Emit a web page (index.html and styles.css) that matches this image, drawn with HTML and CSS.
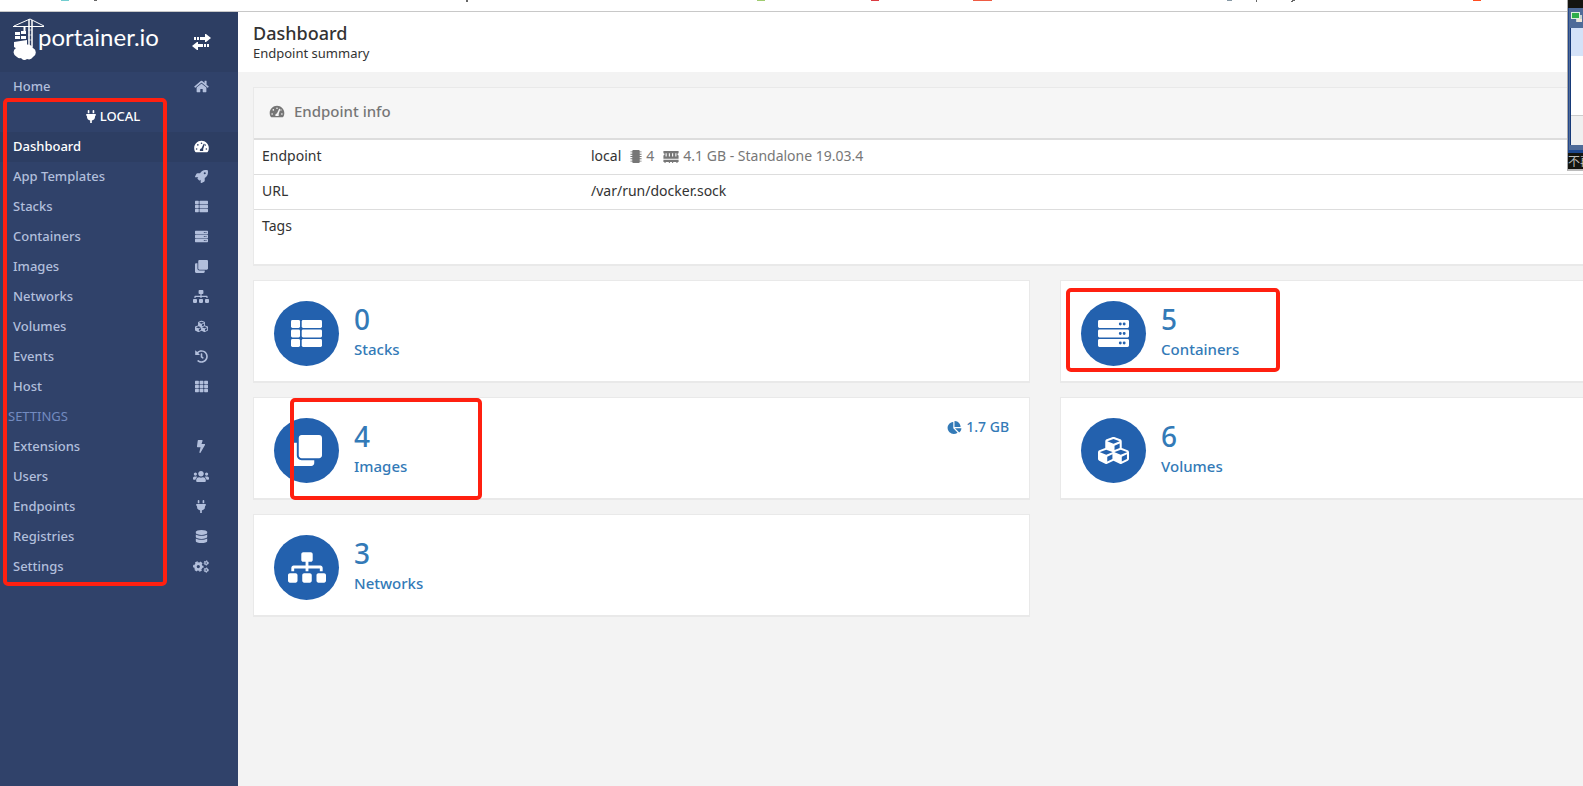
FILE: index.html
```html
<!DOCTYPE html>
<html lang="en">
<head>
<meta charset="utf-8">
<title>Portainer</title>
<link rel="stylesheet" href="styles.css">
</head>
<body>
<svg class="defs" aria-hidden="true">
  <symbol id="home" viewBox="0 0 576 512"><path d="M280.37 148.26L96 300.11V464a16 16 0 0 0 16 16l112.06-.29a16 16 0 0 0 15.92-16V368a16 16 0 0 1 16-16h64a16 16 0 0 1 16 16v95.64a16 16 0 0 0 16 16.05L464 480a16 16 0 0 0 16-16V300L295.67 148.26a12.19 12.19 0 0 0-15.3 0zM571.6 251.47L488 182.56V44.05a12 12 0 0 0-12-12h-56a12 12 0 0 0-12 12v72.61L318.47 43a48 48 0 0 0-61 0L4.34 251.47a12 12 0 0 0-1.6 16.9l25.5 31A12 12 0 0 0 45.15 301l235.22-193.74a12.19 12.19 0 0 1 15.3 0L530.9 301a12 12 0 0 0 16.9-1.6l25.5-31a12 12 0 0 0-1.7-16.93z"/></symbol>
  <symbol id="plug" viewBox="0 0 384 512"><path d="M320,32a32,32,0,0,0-64,0v96h64Zm48,128H16A16,16,0,0,0,0,176v32a16,16,0,0,0,16,16H32v32A160.07,160.07,0,0,0,160,412.8V512h64V412.8A160.07,160.07,0,0,0,352,256V224h16a16,16,0,0,0,16-16V176A16,16,0,0,0,368,160ZM128,32a32,32,0,0,0-64,0v96h64Z"/></symbol>
  <symbol id="gauge" viewBox="0 0 576 512"><path fill-rule="evenodd" d="M288 32C128.94 32 0 160.94 0 320c0 52.8 14.25 102.26 39.06 144.8 5.61 9.62 16.3 15.2 27.44 15.2h443c11.14 0 21.83-5.58 27.44-15.2C561.75 422.26 576 372.8 576 320c0-159.06-128.94-288-288-288zM288 96a32 32 0 1 1 0 64a32 32 0 1 1 0-64zM96 384a32 32 0 1 1 0-64a32 32 0 1 1 0 64zM144 224a32 32 0 1 1 0-64a32 32 0 1 1 0 64zM480 384a32 32 0 1 1 0-64a32 32 0 1 1 0 64zM399 145c12 4 19 17 15 30l-63 190c15 25 8 51-4 67H229c-18-35 0-90 55-95l85-177c5-11 17-18 30-15zM440 224a30 30 0 0 1-18-8l17-52c18 0 31 14 31 30s-14 30-30 30z"/></symbol>
  <symbol id="rocket" viewBox="0 0 512 512"><path d="M505.12 19.09c-1.19-5.53-6.66-11-12.21-12.19C460.72 0 435.51 0 410.41 0 307.18 0 245.27 55.2 199.05 128H94.84c-16.35 0-35.56 11.88-42.89 26.48L2.52 253.3A28.4 28.4 0 0 0 0 264a24 24 0 0 0 24 24h103.8l-22.46 22.47c-11.37 11.36-13 32.26 0 45.25l50.9 50.9c11.16 11.2 32.16 13.16 45.28 0L224 384.16V488a24 24 0 0 0 24 24 28.56 28.56 0 0 0 10.7-2.52l98.74-49.39c14.62-7.29 26.5-26.5 26.5-42.86V312.8c72.6-46.31 128.04-108.4 128.04-211.1 0-25.2 0-50.4-6.86-82.61zM384.04 168A40 40 0 1 1 424.05 128 40 40 0 0 1 384.04 168z"/></symbol>
  <symbol id="list" viewBox="0 0 512 512"><rect y="32" width="149" height="132" rx="24"/><rect y="190" width="149" height="132" rx="24"/><rect y="348" width="149" height="132" rx="24"/><rect x="177" y="32" width="335" height="132" rx="24"/><rect x="177" y="190" width="335" height="132" rx="24"/><rect x="177" y="348" width="335" height="132" rx="24"/></symbol>
  <symbol id="server" viewBox="0 0 512 512"><path fill-rule="evenodd" d="M24 32H488a24 24 0 0 1 24 24V140a24 24 0 0 1-24 24H24a24 24 0 0 1-24-24V56a24 24 0 0 1 24-24zM368 74a24 24 0 1 0 0 48a24 24 0 1 0 0-48zM432 74a24 24 0 1 0 0 48a24 24 0 1 0 0-48zM24 190H488a24 24 0 0 1 24 24V298a24 24 0 0 1-24 24H24a24 24 0 0 1-24-24V214a24 24 0 0 1 24-24zM368 232a24 24 0 1 0 0 48a24 24 0 1 0 0-48zM432 232a24 24 0 1 0 0 48a24 24 0 1 0 0-48zM24 348H488a24 24 0 0 1 24 24V456a24 24 0 0 1-24 24H24a24 24 0 0 1-24-24V372a24 24 0 0 1 24-24zM368 390a24 24 0 1 0 0 48a24 24 0 1 0 0-48zM432 390a24 24 0 1 0 0 48a24 24 0 1 0 0-48z"/></symbol>
  <symbol id="clone" viewBox="0 0 512 512"><path d="M464 0c26.51 0 48 21.49 48 48v288c0 26.51-21.49 48-48 48H176c-26.51 0-48-21.49-48-48V48c0-26.51 21.49-48 48-48h288M176 416c-44.112 0-80-35.888-80-80V128H48c-26.51 0-48 21.49-48 48v288c0 26.51 21.49 48 48 48h288c26.51 0 48-21.49 48-48v-48H176z"/></symbol>
  <symbol id="sitemap" viewBox="0 0 640 512"><path d="M128 352H32c-17.67 0-32 14.33-32 32v96c0 17.67 14.33 32 32 32h96c17.67 0 32-14.33 32-32v-96c0-17.67-14.33-32-32-32zm-24-80h192v48h48v-48h192v48h48v-57.59c0-21.17-17.23-38.41-38.41-38.41H344v-64h40c17.67 0 32-14.33 32-32V32c0-17.67-14.33-32-32-32H256c-17.67 0-32 14.33-32 32v96c0 17.67 14.33 32 32 32h40v64H94.41C73.23 224 56 241.23 56 262.41V320h48v-48zm264 80h-96c-17.67 0-32 14.33-32 32v96c0 17.67 14.33 32 32 32h96c17.67 0 32-14.33 32-32v-96c0-17.67-14.33-32-32-32zm240 0h-96c-17.67 0-32 14.33-32 32v96c0 17.67 14.33 32 32 32h96c17.67 0 32-14.33 32-32v-96c0-17.67-14.33-32-32-32z"/></symbol>
  <symbol id="cubes" viewBox="0 0 512 512"><path d="M488.6 250.2L392 214V105.5c0-15-9.3-28.4-23.4-33.7l-100-37.5c-8.1-3.1-17.1-3.1-25.3 0l-100 37.5c-14.1 5.3-23.4 18.7-23.4 33.7V214l-96.6 36.2C9.3 255.5 0 268.9 0 283.9V394c0 13.6 7.7 26.1 19.9 32.2l100 50c10.1 5.1 22.1 5.1 32.2 0l103.9-52 103.9 52c10.1 5.1 22.1 5.1 32.2 0l100-50c12.2-6.1 19.9-18.6 19.9-32.2V283.9c0-15-9.3-28.4-23.4-33.7zM358 214.8l-85 31.9v-68.2l85-37v73.3zM154 104.1l102-38.2 102 38.2v.6l-102 41.4-102-41.4v-.6zm84 291.1l-85 42.5v-79.1l85-38.8v75.4zm0-112l-102 41.4-102-41.4v-.6l102-38.2 102 38.2v.6zm240 112l-85 42.5v-79.1l85-38.8v75.4zm0-112l-102 41.4-102-41.4v-.6l102-38.2 102 38.2v.6z"/></symbol>
  <symbol id="history" viewBox="0 0 512 512"><path d="M504 255.531c.253 136.64-111.18 248.372-247.82 248.468-59.015.042-113.223-20.53-155.822-54.911-11.077-8.94-11.905-25.541-1.839-35.607l11.267-11.267c8.609-8.609 22.353-9.551 31.891-1.984C173.062 425.135 212.781 440 256 440c101.705 0 184-82.311 184-184 0-101.705-82.311-184-184-184-48.814 0-93.149 18.969-126.068 49.932l50.754 50.754c10.08 10.08 2.941 27.314-11.313 27.314H24c-8.837 0-16-7.163-16-16V38.627c0-14.254 17.234-21.393 27.314-11.314l49.372 49.372C129.209 34.136 189.552 8 256 8c136.81 0 247.747 110.78 248 247.531zm-180.912 78.784l9.823-12.63c8.138-10.463 6.253-25.542-4.21-33.679L288 256.349V152c0-13.255-10.745-24-24-24h-16c-13.255 0-24 10.745-24 24v135.651l65.409 50.874c10.463 8.137 25.541 6.253 33.679-4.21z"/></symbol>
  <symbol id="grid" viewBox="0 0 512 512"><rect y="32" width="152" height="132" rx="24"/><rect y="190" width="152" height="132" rx="24"/><rect y="348" width="152" height="132" rx="24"/><rect x="180" y="32" width="152" height="132" rx="24"/><rect x="180" y="190" width="152" height="132" rx="24"/><rect x="180" y="348" width="152" height="132" rx="24"/><rect x="360" y="32" width="152" height="132" rx="24"/><rect x="360" y="190" width="152" height="132" rx="24"/><rect x="360" y="348" width="152" height="132" rx="24"/></symbol>
  <symbol id="bolt" viewBox="0 0 320 512"><path d="M296 160H180.6l42.6-129.8C227.2 15 215.7 0 200 0H56C44 0 33.8 8.9 32.2 20.8l-32 240C-1.7 275.2 9.5 288 24 288h118.7L96.6 482.5c-3.6 15.2 8 29.5 23.3 29.5 8.4 0 16.4-4.4 20.8-12l176-304c9.3-15.9-2.2-36-20.7-36z"/></symbol>
  <symbol id="users" viewBox="0 0 640 512"><path d="M96 224c35.3 0 64-28.7 64-64s-28.7-64-64-64-64 28.7-64 64 28.7 64 64 64zm448 0c35.3 0 64-28.7 64-64s-28.7-64-64-64-64 28.7-64 64 28.7 64 64 64zm32 32h-64c-17.6 0-33.5 7.1-45.1 18.6 40.3 22.1 68.9 62 75.1 109.4h66c17.7 0 32-14.3 32-32v-32c0-35.3-28.7-64-64-64zm-256 0c61.9 0 112-50.1 112-112S381.9 32 320 32 208 82.1 208 144s50.1 112 112 112zm76.8 32h-8.3c-20.8 10-43.9 16-68.5 16s-47.6-6-68.5-16h-8.3C179.6 288 128 339.6 128 403.2V432c0 26.5 21.5 48 48 48h288c26.5 0 48-21.5 48-48v-28.8c0-63.6-51.6-115.2-115.2-115.2zm-223.7-13.4C161.5 263.1 145.6 256 128 256H64c-35.3 0-64 28.7-64 64v32c0 17.7 14.3 32 32 32h65.9c6.3-47.4 34.9-87.3 75.2-109.4z"/></symbol>
  <symbol id="database" viewBox="0 0 448 512"><path d="M448 73.143v45.714C448 159.143 347.667 192 224 192S0 159.143 0 118.857V73.143C0 32.857 100.333 0 224 0s224 32.857 224 73.143zM448 176v102.857C448 319.143 347.667 352 224 352S0 319.143 0 278.857V176c48.125 33.143 136.208 48.572 224 48.572S399.874 209.143 448 176zm0 160v102.857C448 479.143 347.667 512 224 512S0 479.143 0 438.857V336c48.125 33.143 136.208 48.572 224 48.572S399.874 369.143 448 336z"/></symbol>
  <symbol id="cogs" viewBox="0 0 640 512"><g fill="none" stroke="currentColor"><circle cx="212" cy="256" r="118" stroke-width="106"/><circle cx="212" cy="256" r="180" stroke-width="60" stroke-dasharray="104 84.500" stroke-dashoffset="52"/><circle cx="528" cy="112" r="56" stroke-width="50"/><circle cx="528" cy="112" r="88" stroke-width="36" stroke-dasharray="50 42.200"/><circle cx="528" cy="400" r="56" stroke-width="50"/><circle cx="528" cy="400" r="88" stroke-width="36" stroke-dasharray="50 42.200"/></g></symbol>
  <symbol id="pie" viewBox="0 0 544 512"><path d="M527.79 288H290.5l158.03 158.03c6.04 6.04 15.98 6.53 22.19.68 38.7-36.46 65.32-85.61 73.13-140.86 1.34-9.46-6.51-17.85-16.06-17.85zm-15.83-64.8C503.72 103.74 408.26 8.28 288.8.04 279.68-.59 272 7.1 272 16.24V240h223.77c9.14 0 16.82-7.68 16.19-16.8zM224 288V50.71c0-9.55-8.39-17.4-17.84-16.06C86.99 51.49-4.1 155.6.14 280.37 4.5 408.51 114.83 513.59 243.03 511.98c50.4-.63 96.97-16.87 135.26-44.03 7.9-5.6 8.42-17.23 1.57-24.08L224 288z"/></symbol>
  <symbol id="chip" viewBox="0 0 12 14"><rect x="2" width="8" height="14" rx="1"/><path d="M0 1.5h12v1H0zM0 4h12v1H0zM0 6.5h12v1H0zM0 9h12v1H0zM0 11.5h12v1H0z"/></symbol>
  <symbol id="memory" viewBox="0 0 14 12"><path fill-rule="evenodd" d="M0 1h14v2a1 1 0 0 0 0 2v3H0V5a1 1 0 0 0 0-2zM2 3v3h1V3zM5 3v3h1V3zM8 3v3h1V3zM11 3v3h1V3zM0 9h14v2h-1v1h-1v-1H9v1H8v-1H6v1H5v-1H2v1H1v-1H0z"/></symbol>
</svg>

<div class="browser-bar" aria-hidden="true">
  <svg width="1583" height="2" viewBox="0 0 1583 2">
    <path fill="#72cdd0" d="M61 0h8v1h-8z"/><path fill="#666" d="M94 0h3v1h-3zM466 0h2v2h-2zM1256 0h1v2h-1zM1292 0h3v1h-3zM1291 1h2v1h-2z"/><path fill="#a0cc70" d="M757 0h8v1h-8z"/><path fill="#db3b41" d="M871 0h8v1h-8z"/><path fill="#ee5b43" d="M973 0h19v1h-19z"/><path fill="#8799a5" d="M1227 0h5v1h-5z"/><path fill="#ff4d20" d="M1473 0h8v1h-8z"/>
  </svg>
</div>

<div class="page">
  <aside class="sidebar">
    <div class="brand">
      <svg class="crane" width="32" height="44" viewBox="0 0 32 44" aria-hidden="true">
        <g fill="none" stroke="#fff"><path d="M0 9.500h31M1 9L17 2l14 7"/><path stroke-width="1.500" d="M16 2v30M19 3v27"/><path stroke-width="2" d="M11.500 9v6"/><path d="M15 13h4M15 18h4M15 23h4" opacity=".6"/></g>
        <path fill="#fff" d="M8 14h5v3H8zM2 15h5v3H2zM2 19h5v3H2zM8 19h5v3H8zM1 25l13-2v8l-8 2-5-3z"/>
        <path fill="#fff" d="M4 40a5 5 0 0 1-1-9 6 6 0 0 1 9-3 6 6 0 0 1 8 3 5 5 0 0 1 0 9 5 5 0 0 1-6 2 4 4 0 0 1-6-1q-2 1-4-1z"/>
      </svg>
      <span class="brand-name">portainer.io</span>
      <button class="toggle" aria-label="Toggle sidebar"><svg width="19" height="16" viewBox="0 0 19 16"><path fill="#fff" d="M2 3h2v3H2zM5 3h2v3H5zM8 3h5V0h1l5 4-5 4h-1V6H8zM17 10h-2v3h2zM14 10h-2v3h2zM11 10H6V8H5l-5 4 5 4h1v-3h5z"/></svg></button>
    </div>
    <nav class="menu">
      <a class="item" href="#">Home<span class="slot"><svg class="i w15"><use href="#home"/></svg></span></a>
      <div class="endpoint"><svg class="i w10"><use href="#plug"/></svg>LOCAL</div>
      <a class="item active" href="#">Dashboard<span class="slot"><svg class="i w15"><use href="#gauge"/></svg></span></a>
      <a class="item" href="#">App Templates<span class="slot"><svg class="i w13"><use href="#rocket"/></svg></span></a>
      <a class="item" href="#">Stacks<span class="slot"><svg class="i w13"><use href="#list"/></svg></span></a>
      <a class="item" href="#">Containers<span class="slot"><svg class="i w13"><use href="#server"/></svg></span></a>
      <a class="item" href="#">Images<span class="slot"><svg class="i w13"><use href="#clone"/></svg></span></a>
      <a class="item" href="#">Networks<span class="slot"><svg class="i w16"><use href="#sitemap"/></svg></span></a>
      <a class="item" href="#">Volumes<span class="slot"><svg class="i w13"><use href="#cubes"/></svg></span></a>
      <a class="item" href="#">Events<span class="slot"><svg class="i w13"><use href="#history"/></svg></span></a>
      <a class="item" href="#">Host<span class="slot"><svg class="i w13"><use href="#grid"/></svg></span></a>
      <div class="section">SETTINGS</div>
      <a class="item" href="#">Extensions<span class="slot"><svg class="i w10"><use href="#bolt"/></svg></span></a>
      <a class="item" href="#">Users<span class="slot"><svg class="i w16"><use href="#users"/></svg></span></a>
      <a class="item" href="#">Endpoints<span class="slot"><svg class="i w10"><use href="#plug"/></svg></span></a>
      <a class="item" href="#">Registries<span class="slot"><svg class="i w13"><use href="#database"/></svg></span></a>
      <a class="item" href="#">Settings<span class="slot"><svg class="i w16"><use href="#cogs"/></svg></span></a>
      <div class="mark mark-menu"></div>
    </nav>
  </aside>

  <main class="main">
    <header class="head">
      <h1>Dashboard</h1>
      <p>Endpoint summary</p>
    </header>
    <div class="content">
      <section class="widget">
        <h2><svg class="i w16"><use href="#gauge"/></svg>Endpoint info</h2>
        <table>
          <tr class="first"><td class="key">Endpoint</td><td><div class="info"><span>local</span><span class="muted"><svg class="i chip"><use href="#chip"/></svg>4</span><span class="muted"><svg class="i w16"><use href="#memory"/></svg>4.1 GB - Standalone 19.03.4</span></div></td></tr>
          <tr><td class="key">URL</td><td>/var/run/docker.sock</td></tr>
          <tr class="tags"><td class="key">Tags</td><td></td></tr>
        </table>
      </section>
      <div class="cards">
        <a class="card" href="#"><span class="disc"><svg class="big"><use href="#list"/></svg></span><span class="text"><span class="count">0</span><span class="label">Stacks</span></span></a>
        <a class="card" href="#"><span class="disc"><svg class="big"><use href="#server"/></svg></span><span class="text"><span class="count">5</span><span class="label">Containers</span></span><span class="mark mark-containers"></span></a>
        <a class="card" href="#"><span class="disc"><svg class="big"><use href="#clone"/></svg></span><span class="text"><span class="count">4</span><span class="label">Images</span></span><span class="size"><svg class="i w15"><use href="#pie"/></svg>1.7 GB</span><span class="mark mark-images"></span></a>
        <a class="card" href="#"><span class="disc"><svg class="big"><use href="#cubes"/></svg></span><span class="text"><span class="count">6</span><span class="label">Volumes</span></span></a>
        <a class="card" href="#"><span class="disc"><svg class="big wide"><use href="#sitemap"/></svg></span><span class="text"><span class="count">3</span><span class="label">Networks</span></span></a>
      </div>
    </div>
  </main>
</div>

<div class="thumb" aria-hidden="true">
  <div class="thumb-black"></div>
  <div class="thumb-window">
    <svg width="14" height="20" viewBox="0 0 14 20"><path fill="#c9d3d2" d="M7 7h6v7H7z"/><path fill="#dff0df" d="M2 4h9v7H2z"/><path fill="#2fae49" d="M3 5h7v5H3z"/><path fill="#eee6d8" d="M8 11h5v3H8z"/></svg>
    <div class="pane"><div class="pane-top"></div><div class="pane-mid"></div><div class="pane-foot"></div></div>
  </div>
  <div class="thumb-caption">不再</div>
</div>
</body>
</html>
```
FILE: styles.css
```css
* { box-sizing: border-box; }

body {
  margin: 0;
  height: 100vh;
  overflow: hidden;
  position: relative;
  display: flex;
  flex-direction: column;
  background: #f3f3f3;
  color: #333;
  font: 14px/20px "Noto Sans", sans-serif;
}

a { color: inherit; text-decoration: none; }
h1, h2, p { margin: 0; font-weight: 500; }

.defs { position: absolute; width: 0; height: 0; }

.i { height: 13px; fill: currentColor; flex: none; display: block; }
.w10 { width: 10px; }
.w13 { width: 13px; }
.w15 { width: 15px; }
.w16 { width: 16px; }

.browser-bar {
  height: 12px;
  flex: none;
  overflow: hidden;
  background: #fff;
  border-bottom: 1px solid #c8c8c8;
}
.browser-bar svg { display: block; }

/* The page is wider than the window and runs off its right edge. */
.page { display: flex; flex: 1; width: 117%; }

.sidebar { width: 238px; flex: none; background: #30426a; }

.brand {
  height: 60px;
  display: flex;
  padding: 5px 27px 0 13px;
  background: #2d3e63;
  color: #fff;
}
.crane { flex: none; }
.brand-name {
  margin-left: -7px;
  font: 24px/40px Lato, sans-serif;
}
.toggle {
  align-self: flex-start;
  margin: 17px 0 0 auto;
  padding: 0;
  border: 0;
  background: none;
}
.toggle svg { display: block; }

.menu { position: relative; font-size: 13px; font-weight: 500; line-height: 28px; }
.item {
  display: flex;
  align-items: center;
  height: 30px;
  padding: 0 27px 2px 13px;
  color: #b2bfdc;
}
.item.active { background: #2d3e63; color: #fff; }
.slot { width: 20px; margin-left: auto; display: flex; justify-content: center; }
.endpoint {
  display: flex;
  align-items: center;
  justify-content: center;
  gap: 4px;
  height: 30px;
  padding: 0 12px 2px 0;
  color: #fff;
}
.section { height: 30px; padding-left: 8px; color: #738bc0; font-weight: 400; }

.mark {
  position: absolute;
  border: 4px solid #ff2010;
  border-radius: 5px;
  pointer-events: none;
}
.mark-menu { left: 3px; top: 26px; width: 164px; bottom: -4px; }
.mark-containers { left: 5px; top: 7px; width: 214px; height: 84px; }
.mark-images { left: 36px; top: 0; width: 192px; height: 102px; }

.main { flex: 1; min-width: 0; }
.head { height: 60px; padding: 9px 15px 0; background: #fff; }
.head h1 { font-size: 18px; line-height: 24px; }
.head p { font-size: 13px; line-height: 16px; font-weight: 400; }

.content { padding: 15px; }

.widget, .card {
  background: #fff;
  border: 1px solid #e9e9e9;
  border-bottom-width: 2px;
}
.widget { margin-bottom: 14px; }
.widget h2 {
  display: flex;
  align-items: center;
  gap: 9px;
  height: 52px;
  padding: 0 15px 4px;
  background: #f6f6f6;
  border-bottom: 2px solid #ddd;
  color: #767676;
  font-size: 15px;
}

table { width: 100%; table-layout: fixed; border-collapse: collapse; }
td { height: 35px; padding: 6px 8px 7px; vertical-align: top; }
tr + tr td { border-top: 1px solid #ddd; }
.key { width: 329px; }
.first td { height: 34px; }
.tags td { height: 55px; }
.info { display: flex; gap: 9px; }
.muted { display: flex; align-items: center; gap: 4px; color: #777; }
.chip { width: 12px; }

.cards { display: grid; grid-template-columns: 1fr 1fr; gap: 14px 30px; }
.card {
  position: relative;
  display: flex;
  align-items: flex-start;
  height: 103px;
  padding: 20px;
  color: #337ab7;
}
.disc {
  width: 65px;
  height: 65px;
  flex: none;
  display: flex;
  align-items: center;
  justify-content: center;
  border-radius: 50%;
  background: #2361ae;
  color: #fff;
}
.big { width: 31px; height: 31px; fill: currentColor; }
.big.wide { width: 38px; }
.text { display: flex; flex-direction: column; margin-left: 15px; font-weight: 500; }
.count { font-size: 28px; line-height: 37px; }
.label { font-size: 15px; line-height: 22px; }
.size { display: flex; align-items: center; gap: 4px; margin-left: auto; font-weight: 500; line-height: 18px; }

/* Preview of another window, docked over the right edge. */
.thumb {
  position: absolute;
  right: 0;
  top: 0;
  width: 16px;
  height: 171px;
  display: flex;
  flex-direction: column;
  overflow: hidden;
  border-left: 1px solid #aaa;
  border-bottom: 2px solid #bbb;
  background: #14140f;
}
.thumb-black { height: 8px; flex: none; }
.thumb-window { flex: 1; background: #4f6b98; border-left: 1px solid #24478a; border-bottom: 3px solid #1d478e; }
.thumb-window svg { display: block; }
.pane { margin-left: 1px; border-left: 1px solid #173a78; background: #fff; }
.pane-top { height: 28px; background: #d4e2f8; }
.pane-mid { height: 60px; border-bottom: 1px solid #ccc; }
.pane-foot { height: 29px; background: #f0f0f0; }
.thumb-caption {
  height: 16px;
  flex: none;
  color: #bbb;
  font: 12px/16px "Noto Sans CJK SC", sans-serif;
  white-space: nowrap;
}
```
